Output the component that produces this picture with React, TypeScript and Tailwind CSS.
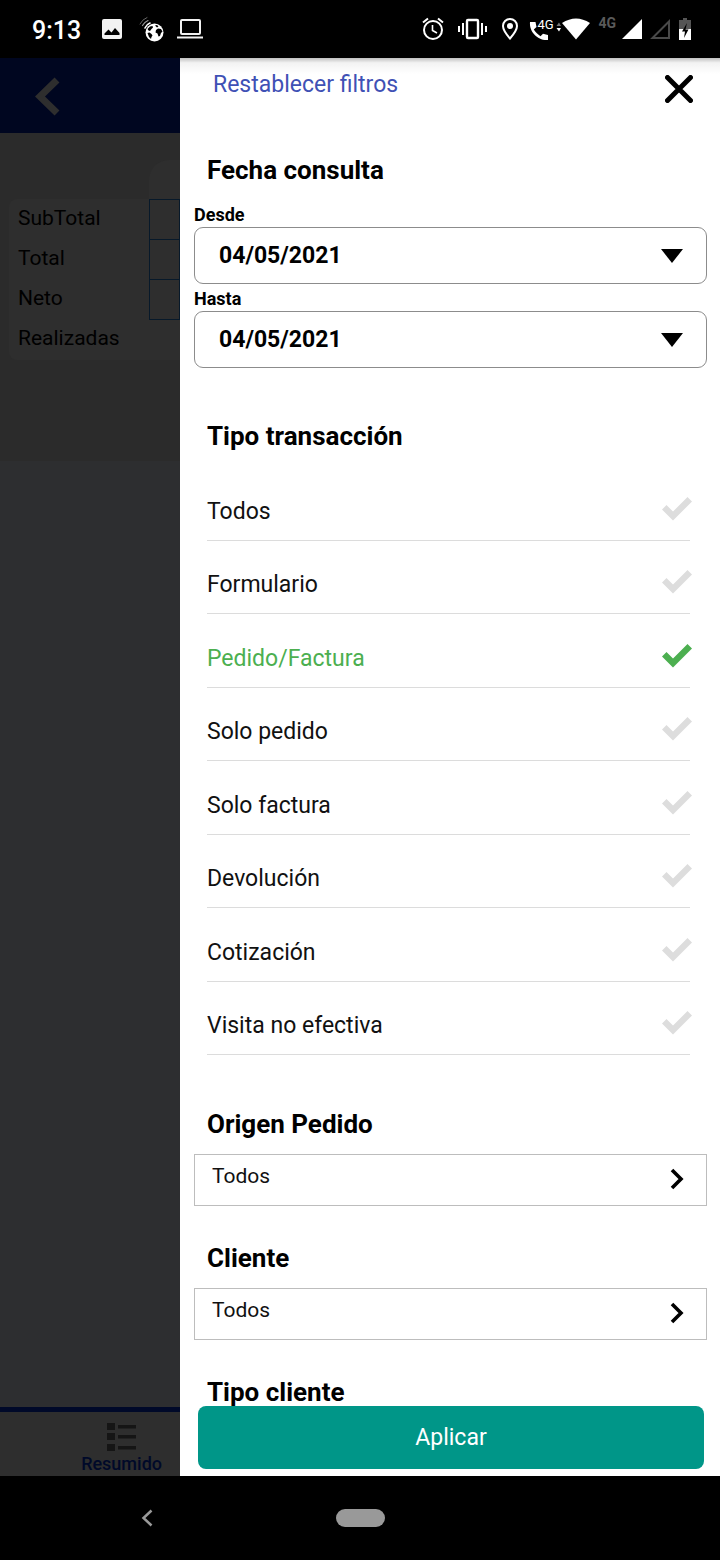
import { useState } from "react";

const TRANSACTION_TYPES = [
  "Todos",
  "Formulario",
  "Pedido/Factura",
  "Solo pedido",
  "Solo factura",
  "Devolución",
  "Cotización",
  "Visita no efectiva",
];

const SUMMARY_ROWS = ["SubTotal", "Total", "Neto", "Realizadas"];

export default function App() {
  return (
    <div className="flex h-screen flex-col overflow-hidden bg-black font-['Roboto',sans-serif] text-black">
      <StatusBar />
      <div className="flex min-h-0 flex-1">
        <SummaryPage />
        <FilterDrawer />
      </div>
      <SystemNav />
    </div>
  );
}

function StatusBar() {
  return (
    <header className="flex h-[58px] shrink-0 items-center justify-between pr-[29px] pl-8 text-white">
      <div className="flex items-center">
        <time className="pt-1 text-[25px] leading-8 font-medium">9:13</time>
        <svg viewBox="0 0 22 22" className="ml-5 size-[22px]" aria-hidden="true">
          <rect x="1" y="1" width="20" height="20" rx="2" fill="#f2f2f2" />
          <path d="M3.500 17V15.500L7.500 11.500 10.500 14.500 14 10 18.500 15V17Z" fill="#000" />
        </svg>
        <svg viewBox="0 0 26 26" className="ml-4 size-[26px]" aria-hidden="true">
          <circle cx="15.500" cy="16.500" r="9" fill="#fff" />
          <path
            d="M8.500 13 11 10.500 13.500 10 14 11.500 12.500 13 11 15 9.500 14.500ZM8.500 17 10.500 16.500 12.500 18 13.500 19.500 12.500 21 12 23 10 21ZM16 9.500 18 9 19.500 10.500 18 11.500ZM17 14 19 12.500 22 13 23.500 15.500 22 17 21 20 19.500 20.500 18.500 17.500 16.500 16.500Z"
            fill="#000"
          />
          <g fill="none" stroke="#fff" strokeLinecap="round">
            <path d="M6 12A9 9 0 0 1 11 7" strokeWidth="1.600" />
            <path d="M3.500 9.500A11 11 0 0 1 9 4.500" strokeWidth="1.200" stroke="#999" />
            <path d="M1 8A13 13 0 0 1 8 1.500" strokeWidth="1" stroke="#666" />
          </g>
        </svg>
        <svg viewBox="0 0 26 22" className="ml-3 h-[22px] w-[26px]" aria-hidden="true">
          <rect x="4" y="2" width="19" height="14" rx="1" fill="none" stroke="#f2f2f2" strokeWidth="2" />
          <path d="M0 18.500H26V20.500H0Z" fill="#f2f2f2" />
        </svg>
      </div>

      <div className="flex items-center">
        <svg viewBox="0 0 22 24" className="h-6 w-[22px]" aria-hidden="true">
          <g fill="none" stroke="#fff" strokeWidth="2">
            <circle cx="11" cy="13" r="9" />
            <path d="M10.500 8V13.500L15 16" strokeWidth="1.600" />
            <path d="M1 5.500 6 1.500M16 1.500 21 5.500" />
          </g>
        </svg>
        <svg viewBox="0 0 29 22" className="ml-[14px] h-[22px] w-[29px]" aria-hidden="true">
          <rect x="9" y="2" width="11" height="18" rx="1" fill="none" stroke="#fff" strokeWidth="2.400" />
          <path d="M1 8V14M5 5V17M24 5V17M28 8V14" stroke="#fff" strokeWidth="2" />
        </svg>
        <svg viewBox="0 0 16 22" className="ml-[15px] h-[22px] w-4" aria-hidden="true">
          <path
            d="M8 1a7 7 0 0 0-7 7c0 4.500 7 12.500 7 12.500S15 12.500 15 8a7 7 0 0 0-7-7Z"
            fill="none"
            stroke="#fff"
            strokeWidth="2"
          />
          <circle cx="8" cy="8" r="3" fill="#fff" />
        </svg>
        <div className="relative ml-[11px] h-6 w-8">
          <svg viewBox="0 0 32 24" className="h-6 w-8" aria-hidden="true">
            <path
              d="M1 5H6.500L7.500 10 4.800 12.500C6.500 15.500 9 17.500 11.500 19.200L14 16.800 19 18V23C9 24 0 15 1 5Z"
              fill="#fff"
            />
            <path d="M27.500 9 30 5.500 32 9Z" fill="#777" />
            <path d="M27.500 11 30 14.500 32 11Z" fill="#fff" />
          </svg>
          <span className="absolute top-0 left-2 text-[13px] leading-4">4G</span>
        </div>
        <svg viewBox="0 0 28 22" className="ml-[1px] h-[22px] w-7" aria-hidden="true">
          <path d="M0 5Q14-4 28 5L14 21.500Z" fill="#fff" />
        </svg>
        <span className="ml-2 pb-3 text-[14px] leading-4 font-bold text-[#5a5a5a]">4G</span>
        <svg viewBox="0 0 20 20" className="ml-[6px] size-5" aria-hidden="true">
          <path d="M20 0V20H0Z" fill="#fff" />
        </svg>
        <svg viewBox="0 0 20 20" className="ml-2 size-5" aria-hidden="true">
          <path d="M19 2.500V19H2.500Z" fill="none" stroke="#4a4a4a" strokeWidth="2" />
        </svg>
        <svg viewBox="0 0 12 22" className="ml-[9px] h-[22px] w-3" aria-hidden="true">
          <path d="M0 2H4V0H8V2H12V11H0Z" fill="#555" />
          <path d="M0 11H12V22H0Z" fill="#fff" />
          <path d="M8 5 3 13.500H6L5 20 9.500 11.500H6.500Z" fill="#000" />
        </svg>
      </div>
    </header>
  );
}

/** Page behind the drawer, already dimmed. */
function SummaryPage() {
  return (
    <main className="flex w-1/4 flex-col overflow-hidden bg-[#2d2e30]">
      <div className="flex h-[75px] shrink-0 items-center bg-[#000620] pt-[2px] pl-[35px]">
        <button type="button" aria-label="Volver">
          <svg viewBox="0 0 25 39" className="h-[39px] w-[25px]" aria-hidden="true">
            <path d="M22 3 5 19.500 22 36" fill="none" stroke="#2e2e2e" strokeWidth="7" />
          </svg>
        </button>
      </div>
      <div className="h-[328px] shrink-0 bg-[#2b2b2b] pt-[27px] pl-[9px]">
        <div className="ml-[140px] h-[39px] rounded-tl-[20px] bg-[#2e2e2e]" />
        <table className="w-full table-fixed overflow-hidden rounded-l-lg bg-[#2e2e2e]">
          <tbody>
            {SUMMARY_ROWS.map((row, i) => (
              <tr key={row} className="h-10">
                <th scope="row" className="w-[140px] pb-1 pl-[9px] text-left text-[21px] leading-6 font-normal">
                  {row}
                </th>
                <td className={i < 3 ? "border border-[#07192a]" : ""} />
              </tr>
            ))}
          </tbody>
        </table>
      </div>
      <nav className="mt-auto flex h-[69px] flex-col items-end border-t-[5px] border-[#000929] bg-[#2e2e2e] pr-[18px]">
        <button type="button" className="flex flex-col items-center pt-[11px] text-[18px] leading-[26px] font-medium text-[#000929]">
          <svg viewBox="0 0 29 28" className="h-7 w-[29px]" aria-hidden="true">
            <path
              d="M0 0H8V7H0ZM0 10H8V17H0ZM0 21H8V28H0ZM11 2H29V5.500H11ZM11 12H29V15.500H11ZM11 23H29V26.500H11Z"
              fill="#151515"
            />
          </svg>
          Resumido
        </button>
      </nav>
    </main>
  );
}

function FilterDrawer() {
  const [selected, setSelected] = useState("Pedido/Factura");

  return (
    <aside className="relative flex w-3/4 flex-col bg-white">
      <div className="pointer-events-none absolute inset-x-0 top-0 h-4 bg-linear-to-b from-black/25 via-black/5 via-30% to-transparent" />
      <div className="min-h-0 flex-1 overflow-hidden pr-[13px] pl-[14px]">
        <div className="flex h-[92px] items-start justify-between pr-[14px] pl-[19px]">
          <button type="button" className="pt-[13px] text-[23px] leading-7 text-[#3f51b5]">
            Restablecer filtros
          </button>
          <button type="button" aria-label="Cerrar" className="pt-[17px]">
            <svg viewBox="0 0 28 28" className="size-7" aria-hidden="true">
              <path d="M2.500 2.500 25.500 25.500M25.500 2.500 2.500 25.500" stroke="#000" strokeWidth="5" strokeLinecap="round" />
            </svg>
          </button>
        </div>

        <SectionTitle text="Fecha consulta" />
        <div className="pt-[10px]">
          <DateField id="desde" label="Desde" />
          <DateField id="hasta" label="Hasta" />
        </div>

        <fieldset className="pt-12">
          <SectionTitle text="Tipo transacción" />
          <div className="mt-[11px] mr-[17px] ml-[13px] grid h-[588px] auto-rows-fr">
            {TRANSACTION_TYPES.map((type) => (
              <label
                key={type}
                className={
                  "flex items-end justify-between border-b border-[#dcdcdc] pb-[14px] text-[23px] leading-7 " +
                  (type === selected ? "text-[#4caf50]" : "text-[#111111]")
                }
              >
                <input
                  type="radio"
                  name="tipo"
                  className="sr-only"
                  checked={type === selected}
                  onChange={() => setSelected(type)}
                />
                {type}
                <CheckMark active={type === selected} />
              </label>
            ))}
          </div>
        </fieldset>

        <div className="pt-[49px]">
          <PickerField id="origen" label="Origen Pedido" value="Todos" />
        </div>
        <div className="pt-8">
          <PickerField id="cliente" label="Cliente" value="Todos" />
        </div>
        <div className="pt-8">
          <SectionTitle text="Tipo cliente" />
        </div>
      </div>
      <div className="pr-4 pb-[7px] pl-[18px]">
        <button type="button" className="block h-[63px] w-full rounded-lg bg-[#009688] text-[23px] leading-7 text-white">
          Aplicar
        </button>
      </div>
    </aside>
  );
}

function SectionTitle({ text, id }: { text: string; id?: string }) {
  return (
    <h2 id={id} className="pl-[13px] text-[26px] leading-10 font-bold">
      {text}
    </h2>
  );
}

function DateField({ id, label }: { id: string; label: string }) {
  return (
    <div>
      <label htmlFor={id} className="block h-[27px] pt-[2px] text-[18px] leading-[26px] font-bold">
        {label}
      </label>
      <div className="relative">
        <select
          id={id}
          className="block h-[57px] w-full appearance-none rounded-[9px] border border-[#8c8c8c] bg-white pt-[2px] pl-6 text-[23px] font-bold"
        >
          <option>04/05/2021</option>
        </select>
        <svg viewBox="0 0 22 14" className="pointer-events-none absolute top-[22px] right-6 h-[14px] w-[22px]" aria-hidden="true">
          <path d="M0 0H22L11 14Z" fill="#000" />
        </svg>
      </div>
    </div>
  );
}

function PickerField({ id, label, value }: { id: string; label: string; value: string }) {
  return (
    <>
      <SectionTitle id={id} text={label} />
      <button
        type="button"
        aria-describedby={id}
        className="mt-[10px] flex h-[52px] w-full justify-between border border-[#bdbdbd] pt-2 pr-[22px] pl-[17px] text-[21px] leading-[26px] text-[#111111]"
      >
        {value}
        <svg viewBox="0 0 14 22" className="mt-[5px] h-[22px] w-[14px]" aria-hidden="true">
          <path d="M2 2 11 11 2 20" fill="none" stroke="#000" strokeWidth="3.600" />
        </svg>
      </button>
    </>
  );
}

function CheckMark({ active }: { active: boolean }) {
  return (
    <svg viewBox="0 0 30 24" className="-mr-[2px] mb-[5px] h-6 w-[30px]" aria-hidden="true">
      <path d="M0 12.500 4.500 8 11 14.500 25.500 0 30 4.500 11 23.500Z" fill={active ? "#4caf50" : "#dddddd"} />
    </svg>
  );
}

function SystemNav() {
  return (
    <footer className="grid h-[84px] shrink-0 grid-cols-[1fr_auto_1fr] items-center">
      <div className="flex pl-[141px]">
        <button type="button" aria-label="Atrás">
          <svg viewBox="0 0 12 18" className="h-[18px] w-3" aria-hidden="true">
            <path d="M10.500 1.500 2.500 9 10.500 16.500" fill="none" stroke="#999" strokeWidth="2.500" />
          </svg>
        </button>
      </div>
      <button type="button" aria-label="Inicio" className="h-[18px] w-[49px] rounded-full bg-[#999999]" />
    </footer>
  );
}
